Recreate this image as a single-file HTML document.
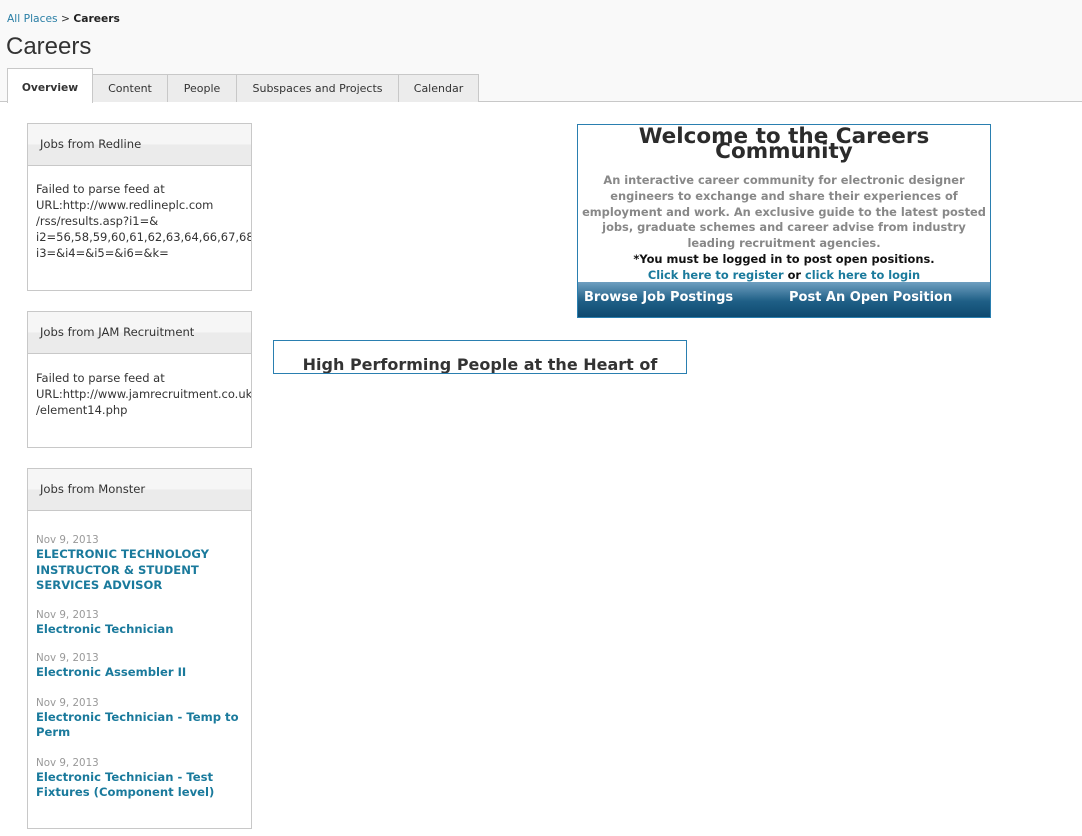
<!DOCTYPE html>
<html><head><meta charset="utf-8"><style>
*{margin:0;padding:0;box-sizing:border-box}
body{width:1082px;height:836px;overflow:hidden;background:#fff;font-family:"DejaVu Sans","Liberation Sans",sans-serif;position:relative}
.top{position:absolute;left:0;top:0;width:1082px;height:102px;background:#f9f9f9;border-bottom:1px solid #c8c8c8}
.bc{position:absolute;left:7px;top:12px;font-size:10.7px;color:#333}
.bc a{color:#2a7fa6;text-decoration:none}
.bc b{color:#222}
h1{position:absolute;left:6px;top:33px;font:24px "Liberation Sans",Arial,sans-serif;color:#333}
.tab{position:absolute;top:74px;height:28px;border:1px solid #c8c8c8;border-bottom:none;background:#ececec;font-size:11px;color:#333;text-align:center;line-height:27px}
.tab.on{top:68px;height:35px;background:#fff;font-weight:bold;line-height:38px;font-size:10.7px}
.panel{position:absolute;left:27px;width:225px;border:1px solid #c8c8c8;background:#fff;overflow:hidden}
.ph{height:42px;border-bottom:1px solid #c8c8c8;background:linear-gradient(#f6f6f6 0,#f6f6f6 50%,#ebebeb 50%,#ebebeb);font-size:11.6px;color:#333;padding:13px 0 0 12px}
.pb{padding:15px 0 0 8px;font-size:11.5px;line-height:16px;color:#333;white-space:nowrap}
.d{color:#999;font-size:10.3px;line-height:14px}
.l{color:#1a7a9c;font-weight:bold;font-size:11.6px;line-height:15.5px;white-space:normal;padding-right:2px}
.w{position:absolute;left:577px;top:124px;width:414px;height:194px;border:1px solid #2a7fb0;text-align:center;overflow:hidden}
.w h2{font-size:21.5px;line-height:15px;color:#2b2b2b;padding-top:4px;font-weight:bold}
.w p{font-size:11.4px;font-weight:bold;color:#888;line-height:15.8px;margin-top:14px;white-space:nowrap}
.w .k{color:#111}
.w .k a{color:#1a7a9c}
.bar{position:absolute;left:0;bottom:0;width:412px;height:35px;background:linear-gradient(#6f9fc0,#1f5f86 55%,#0e4a70);color:#fff;font-weight:bold;font-size:13px;text-align:left}
.bar span{position:absolute;top:8px}
.hp{position:absolute;left:273px;top:340px;width:414px;height:34px;border:1px solid #2a7fb0;overflow:hidden;text-align:center}
.hp div{font-size:16px;font-weight:bold;color:#333;margin-top:14px;white-space:nowrap}
</style></head><body>
<div class="top"></div>
<div class="bc"><a>All Places</a> &gt; <b>Careers</b></div>
<h1>Careers</h1>
<div class="tab on" style="left:7px;width:86px">Overview</div>
<div class="tab" style="left:92px;width:76px">Content</div>
<div class="tab" style="left:167px;width:70px">People</div>
<div class="tab" style="left:236px;width:163px">Subspaces and Projects</div>
<div class="tab" style="left:398px;width:81px">Calendar</div>

<div class="panel" style="top:123px;height:168px"><div class="ph">Jobs from Redline</div>
<div class="pb">Failed to parse feed at<br>URL:http://www.redlineplc.com<br>/rss/results.asp?i1=&amp;<br>i2=56,58,59,60,61,62,63,64,66,67,68,69<br>i3=&amp;i4=&amp;i5=&amp;i6=&amp;k=</div></div>

<div class="panel" style="top:311px;height:137px"><div class="ph">Jobs from JAM Recruitment</div>
<div class="pb" style="padding-top:16px">Failed to parse feed at<br>URL:http://www.jamrecruitment.co.uk<br>/element14.php</div></div>

<div class="panel" style="top:468px;height:361px"><div class="ph">Jobs from Monster</div>
<div class="pb" style="padding-top:22px;white-space:normal">
<div class="d">Nov 9, 2013</div><div class="l">ELECTRONIC TECHNOLOGY INSTRUCTOR &amp; STUDENT SERVICES ADVISOR</div>
<div class="d" style="margin-top:14px">Nov 9, 2013</div><div class="l">Electronic Technician</div>
<div class="d" style="margin-top:14px">Nov 9, 2013</div><div class="l">Electronic Assembler II</div>
<div class="d" style="margin-top:15px">Nov 9, 2013</div><div class="l">Electronic Technician - Temp to Perm</div>
<div class="d" style="margin-top:15px">Nov 9, 2013</div><div class="l">Electronic Technician - Test Fixtures (Component level)</div>
</div></div>

<div class="w">
<h2>Welcome to the Careers<br>Community</h2>
<p>An interactive career community for electronic designer<br>engineers to exchange and share their experiences of<br>employment and work. An exclusive guide to the latest posted<br>jobs, graduate schemes and career advise from industry<br>leading recruitment agencies.<br><span class="k">*You must be logged in to post open positions.<br><a>Click here to register</a> or <a>click here to login</a></span></p>
<div class="bar"><span style="left:6px">Browse Job Postings</span><span style="left:211px">Post An Open Position</span></div>
</div>

<div class="hp"><div>High Performing People at the Heart of</div></div>
</body></html>
